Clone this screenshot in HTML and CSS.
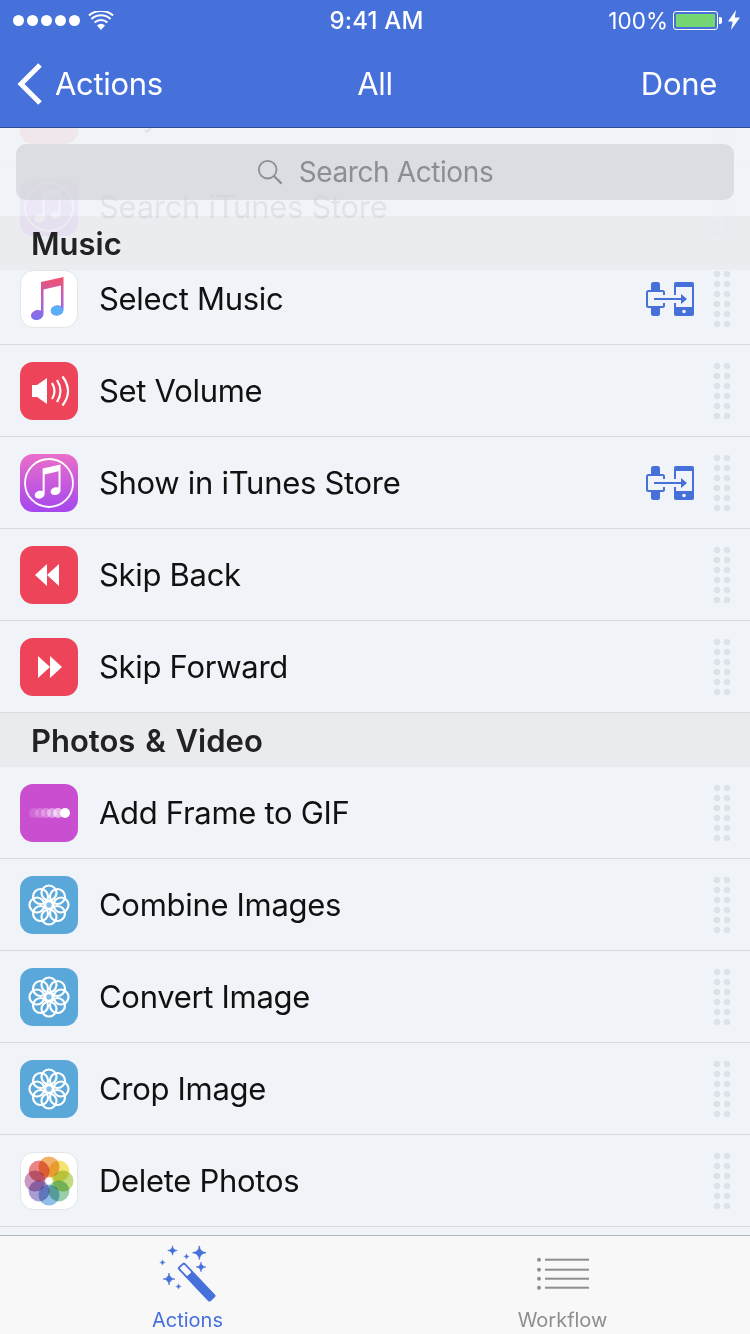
FILE: index.html
```html
<!DOCTYPE html>
<html lang="en">

<head>
  <meta charset="UTF-8">
  <meta name="viewport" content="width=device-width, initial-scale=1.0">
  <title>Actions</title>
  <link rel="stylesheet" href="styles.css">
</head>

<body>

  <!-- shared icons -->
  <svg class="sprites" width="0" height="0" aria-hidden="true">
    <defs>
      <linearGradient id="music-grad" x1="0.45" y1="0" x2="0.45" y2="1">
        <stop offset="0" stop-color="#f5506a" />
        <stop offset="0.5" stop-color="#b85fc4" />
        <stop offset="1" stop-color="#7a70f2" />
      </linearGradient>
      <linearGradient id="itunes-grad" x1="0" y1="0" x2="0" y2="1">
        <stop offset="0" stop-color="#ea6fc9" />
        <stop offset="1" stop-color="#a547ee" />
      </linearGradient>
    </defs>
    <symbol id="transfer" viewBox="0 0 48 34">
      <rect x="5" y="0" width="9" height="34" rx="2.500" fill="#4670da" />
      <rect x="1" y="9" width="17" height="16" rx="1.500" fill="#f0f3f8" stroke="#4670da" stroke-width="2" />
      <rect x="16.500" y="13" width="3" height="8" fill="#f0f3f8" />
      <rect x="28" y="0" width="20" height="34" rx="2" fill="#4670da" />
      <rect x="30" y="5" width="16" height="20" fill="#f0f3f8" />
      <rect x="28" y="13" width="2" height="8" fill="#f0f3f8" />
      <circle cx="38" cy="29.500" r="1.800" fill="#f0f3f8" />
      <rect x="8" y="16" width="32" height="2" fill="#4670da" />
      <path d="M35 12l6 5-6 5z" fill="#4670da" />
    </symbol>
    <symbol id="note" viewBox="0 0 58 58">
      <path d="M21 12 43.500 7V39C43.500 43 40 45.500 36.500 45.500 33 45.500 31 43.700 31 41.300 31 38 34.500 35.500 38 35.500 39 35.500 40.200 35.700 41 36V15.500L23.500 19.500V43.500C23.500 47.500 20 50 16.500 50 13 50 11 48.200 11 45.800 11 42.500 14.500 40 18 40 19 40 20.200 40.200 21 40.500z" />
    </symbol>
    <symbol id="blossom" viewBox="0 0 58 58">
      <rect width="58" height="58" rx="13" fill="#5aa8da" />
      <g fill="none" stroke="#fff" stroke-width="2.200">
        <circle cx="29" cy="17" r="7.500" />
        <circle cx="29" cy="17" r="7.500" transform="rotate(45 29 29)" />
        <circle cx="29" cy="17" r="7.500" transform="rotate(90 29 29)" />
        <circle cx="29" cy="17" r="7.500" transform="rotate(135 29 29)" />
        <circle cx="29" cy="17" r="7.500" transform="rotate(180 29 29)" />
        <circle cx="29" cy="17" r="7.500" transform="rotate(225 29 29)" />
        <circle cx="29" cy="17" r="7.500" transform="rotate(270 29 29)" />
        <circle cx="29" cy="17" r="7.500" transform="rotate(315 29 29)" />
      </g>
      <circle cx="29" cy="29" r="3.500" fill="#7fbbe3" stroke="#fff" stroke-width="1.600" />
    </symbol>
    <symbol id="sparkle" viewBox="0 0 10 10">
      <path d="M5 0Q5.400 4.600 10 5 5.400 5.400 5 10 4.600 5.400 0 5 4.600 4.600 5 0z" fill="#4670da" stroke="#4670da" stroke-width="0.500" />
    </symbol>
  </svg>

  <div class="screen">

    <header class="topbar">
      <div class="status">
        <div class="status-left">
          <span class="signal"><i></i><i></i><i></i><i></i><i></i></span>
          <svg class="wifi" width="26" height="19" viewBox="0 0 26 19">
            <path d="M13 19l-4-4.600a6 6 0 0 1 8 0z" fill="#fff" />
            <path d="M6.600 11.600a9.500 9.500 0 0 1 12.800 0M3.400 7.900a14.200 14.200 0 0 1 19.200 0M.9 4.600a18 18 0 0 1 24.200 0" fill="none" stroke="#fff" stroke-width="2" />
          </svg>
        </div>
        <div class="clock">9:41 AM</div>
        <div class="status-right">
          <span class="percent">100%</span>
          <span class="battery"><span class="battery-fill"></span></span>
          <span class="battery-nub"></span>
          <svg class="bolt" width="12" height="20" viewBox="0 0 12 20">
            <path d="M8 0 0 11.500h4.600L3 20l9-12.500H6.800z" fill="#fff" />
          </svg>
        </div>
      </div>
      <nav class="navbar">
        <a class="nav-back">
          <svg width="26" height="44" viewBox="0 0 26 44">
            <path d="M23 3 4 22l19 19" fill="none" stroke="#fff" stroke-width="5" />
          </svg>
          Actions
        </a>
        <span class="nav-title">All</span>
        <a class="nav-done">Done</a>
      </nav>
    </header>

    <main class="content">
      <div class="list">
        <div class="row">
          <svg class="icon" viewBox="0 0 58 58"><rect width="58" height="58" rx="13" fill="#ee4459" /></svg>
          <span class="row-label">Play Music</span>
          <span class="grip"></span>
        </div>
        <div class="row">
          <svg class="icon" viewBox="0 0 58 58">
            <rect width="58" height="58" rx="13" fill="url(#itunes-grad)" />
            <circle cx="29" cy="29" r="24" fill="none" stroke="#fff" stroke-width="1.800" />
            <use href="#note" x="6" y="5" width="46" height="46" fill="#fff" />
          </svg>
          <span class="row-label">Search iTunes Store</span>
          <span class="grip"></span>
        </div>

        <div class="row">
          <svg class="icon" viewBox="0 0 58 58">
            <rect x="0.500" y="0.500" width="57" height="57" rx="13" fill="#fff" stroke="#e3e5e8" />
            <use href="#note" width="58" height="58" fill="url(#music-grad)" />
            <ellipse cx="37" cy="40.500" rx="6.300" ry="5" fill="#5aaef8" />
          </svg>
          <span class="row-label">Select Music</span>
          <svg class="transfer"><use href="#transfer" /></svg>
          <span class="grip"></span>
        </div>
        <div class="row">
          <svg class="icon" viewBox="0 0 58 58">
            <rect width="58" height="58" rx="13" fill="#ee4459" />
            <path d="M12 23h5l10-7v26l-10-7h-5z" fill="#fff" />
            <path d="M32 21q5 8 0 16M37 18q7 11 0 22M42.500 14.500q11 14.500 0 29" fill="none" stroke="#fff" stroke-width="2.200" />
          </svg>
          <span class="row-label">Set Volume</span>
          <span class="grip"></span>
        </div>
        <div class="row">
          <svg class="icon" viewBox="0 0 58 58">
            <rect width="58" height="58" rx="13" fill="url(#itunes-grad)" />
            <circle cx="29" cy="29" r="24" fill="none" stroke="#fff" stroke-width="1.800" />
            <use href="#note" x="6" y="5" width="46" height="46" fill="#fff" />
          </svg>
          <span class="row-label">Show in iTunes Store</span>
          <svg class="transfer"><use href="#transfer" /></svg>
          <span class="grip"></span>
        </div>
        <div class="row">
          <svg class="icon" viewBox="0 0 58 58">
            <rect width="58" height="58" rx="13" fill="#ee4459" />
            <path d="M27 18v22L15 29zM39 18v22L27 29z" fill="#fff" />
          </svg>
          <span class="row-label">Skip Back</span>
          <span class="grip"></span>
        </div>
        <div class="row">
          <svg class="icon" viewBox="0 0 58 58">
            <rect width="58" height="58" rx="13" fill="#ee4459" />
            <path d="M18 18v22l12-11zM30 18v22l12-11z" fill="#fff" />
          </svg>
          <span class="row-label">Skip Forward</span>
          <span class="grip"></span>
        </div>

        <h2 class="section">Photos &amp; Video</h2>

        <div class="row">
          <svg class="icon" viewBox="0 0 58 58">
            <rect width="58" height="58" rx="13" fill="#c94fd0" />
            <g fill="#fff">
              <circle cx="14" cy="29" r="5" opacity="0.150" />
              <circle cx="20" cy="29" r="5" opacity="0.220" />
              <circle cx="26" cy="29" r="5" opacity="0.300" />
              <circle cx="32" cy="29" r="5" opacity="0.420" />
              <circle cx="38" cy="29" r="5" opacity="0.600" />
              <circle cx="45" cy="29" r="5" />
            </g>
          </svg>
          <span class="row-label">Add Frame to GIF</span>
          <span class="grip"></span>
        </div>
        <div class="row">
          <svg class="icon"><use href="#blossom" /></svg>
          <span class="row-label">Combine Images</span>
          <span class="grip"></span>
        </div>
        <div class="row">
          <svg class="icon"><use href="#blossom" /></svg>
          <span class="row-label">Convert Image</span>
          <span class="grip"></span>
        </div>
        <div class="row">
          <svg class="icon"><use href="#blossom" /></svg>
          <span class="row-label">Crop Image</span>
          <span class="grip"></span>
        </div>
        <div class="row">
          <svg class="icon" viewBox="0 0 58 58">
            <rect x="0.500" y="0.500" width="57" height="57" rx="13" fill="#fff" stroke="#e3e5e8" />
            <g class="petals">
              <circle cx="29" cy="15" r="10.500" fill="#f0a24e" />
              <circle cx="29" cy="15" r="10.500" fill="#f3de55" transform="rotate(45 29 29)" />
              <circle cx="29" cy="15" r="10.500" fill="#b7d568" transform="rotate(90 29 29)" />
              <circle cx="29" cy="15" r="10.500" fill="#84c79b" transform="rotate(135 29 29)" />
              <circle cx="29" cy="15" r="10.500" fill="#7bb4e2" transform="rotate(180 29 29)" />
              <circle cx="29" cy="15" r="10.500" fill="#9a8dc9" transform="rotate(225 29 29)" />
              <circle cx="29" cy="15" r="10.500" fill="#c286b6" transform="rotate(270 29 29)" />
              <circle cx="29" cy="15" r="10.500" fill="#e6716f" transform="rotate(315 29 29)" />
            </g>
            <circle cx="29" cy="29" r="1.500" fill="#fff" />
          </svg>
          <span class="row-label">Delete Photos</span>
          <span class="grip"></span>
        </div>
        <div class="row">
          <svg class="icon" viewBox="0 0 58 58"><rect width="58" height="58" rx="13" fill="#fff" /></svg>
        </div>
      </div>

      <!-- pinned over the scrolled list -->
      <div class="search-wrap">
        <div class="search">
          <svg width="26" height="26" viewBox="0 0 28 28">
            <circle cx="11.500" cy="11.500" r="9.500" fill="none" stroke="#8c8e92" stroke-width="2" />
            <path d="M18.500 18.500l8 8" stroke="#8c8e92" stroke-width="2.400" />
          </svg>
          <span>Search Actions</span>
        </div>
      </div>
      <h2 class="section pinned">Music</h2>
    </main>

    <footer class="tabbar">
      <div class="tab active">
        <svg width="60" height="60" viewBox="0 0 60 60">
          <use href="#sparkle" x="9.500" y="0.500" width="10" height="10" />
          <use href="#sparkle" x="34.300" y="0.700" width="14" height="14" />
          <use href="#sparkle" x="25.500" y="8.500" width="6" height="6" />
          <use href="#sparkle" x="1.500" y="14.500" width="6" height="6" />
          <use href="#sparkle" x="38" y="17" width="10" height="10" />
          <use href="#sparkle" x="5" y="28" width="12" height="12" />
          <use href="#sparkle" x="17.500" y="38.500" width="6" height="6" />
          <rect x="-4.700" y="0" width="9.400" height="47" rx="2" transform="translate(22.500 20) rotate(-43.500)" fill="#4670da" />
          <rect x="-2.900" y="1.800" width="5.800" height="11" rx="1" transform="translate(22.500 20) rotate(-43.500)" fill="#f8f8f8" />
        </svg>
        <span>Actions</span>
      </div>
      <div class="tab">
        <svg width="60" height="60" viewBox="0 0 60 60">
          <g fill="#8e8e8e">
            <circle cx="6" cy="14.700" r="2" />
            <circle cx="6" cy="24.700" r="2" />
            <circle cx="6" cy="33.700" r="2" />
            <circle cx="6" cy="42.700" r="2" />
            <rect x="12" y="13.700" width="44" height="2" />
            <rect x="12" y="23.700" width="44" height="2" />
            <rect x="12" y="32.700" width="44" height="2" />
            <rect x="12" y="41.700" width="44" height="2" />
          </g>
        </svg>
        <span>Workflow</span>
      </div>
    </footer>

  </div>

</body>

</html>
```

FILE: styles.css
```css
:root {
  --blue: #4670da;
  --list-bg: #f0f3f8;
  --line: #d8dade;
  --dot: #dde1e9;
}

* {
  margin: 0;
  padding: 0;
  box-sizing: border-box;
}

body {
  background-color: var(--list-bg);
  color: #111;
  font-family: 'Inter', 'Liberation Sans', sans-serif;
}

.sprites {
  display: block;
  position: absolute;
}

.screen {
  width: 750px;
  height: 1334px;
  display: flex;
  flex-direction: column;
  overflow: hidden;
}

/* top bar */
.topbar {
  flex: none;
  height: 128px;
  background-color: var(--blue);
  border-bottom: 1px solid #2f4f94;
  color: #fff;
}

.status {
  height: 40px;
  display: grid;
  grid-template-columns: 1fr auto 1fr;
  align-items: center;
  padding: 0 10px 0 13px;
}

.status-left {
  display: flex;
  align-items: center;
  gap: 8px;
}

.signal {
  display: flex;
  gap: 3px;
}

.signal i {
  width: 11px;
  height: 11px;
  border-radius: 50%;
  background-color: #fff;
}

.clock {
  font-size: 24px;
  font-weight: 500;
  letter-spacing: 0.200px;
}

.status-right {
  display: flex;
  align-items: center;
  justify-content: flex-end;
}

.percent {
  font-size: 22.500px;
  margin-right: 5px;
}

.battery {
  width: 45px;
  height: 19px;
  padding: 2px;
  border: 1px solid #fff;
  border-radius: 3px;
  display: flex;
}

.battery-fill {
  flex: 1;
  background-color: #76d672;
  border-radius: 1px;
}

.battery-nub {
  width: 3px;
  height: 7px;
  margin-left: 1px;
  margin-right: 6px;
  background-color: #fff;
  border-radius: 0 2px 2px 0;
}

.navbar {
  height: 87px;
  display: grid;
  grid-template-columns: 1fr auto 1fr;
  align-items: center;
  padding: 0 33px;
  font-size: 31px;
  letter-spacing: -0.300px;
}

.nav-back {
  display: flex;
  align-items: center;
  gap: 12px;
  margin-left: -16px;
}

.nav-done {
  justify-self: end;
}

/* list */
.content {
  flex: 1;
  min-height: 0;
  position: relative;
  overflow: hidden;
}

.list {
  margin-top: -59px;
}

.row {
  height: 92px;
  display: flex;
  align-items: center;
  padding: 0 18px 0 20px;
  border-bottom: 1px solid var(--line);
}

.icon {
  width: 58px;
  height: 58px;
  flex: none;
  margin-right: 21px;
}

.row-label {
  flex: 1;
  font-size: 31px;
  letter-spacing: -0.300px;
}

.transfer {
  width: 48px;
  height: 34px;
  margin-right: 18px;
}

.grip {
  width: 20px;
  height: 60px;
  flex: none;
  background: radial-gradient(circle, var(--dot) 3px, transparent 3.600px) 0 0 / 10px 10px;
}

.petals circle {
  mix-blend-mode: multiply;
  opacity: 0.85;
}

.section {
  height: 54px;
  padding-left: 31px;
  display: flex;
  align-items: center;
  font-size: 31px;
  font-weight: 600;
  word-spacing: 2px;
  color: #222;
  background-color: #e9ebef;
}

/* pinned overlays */
.search-wrap {
  position: absolute;
  top: 0;
  left: 0;
  width: 100%;
  height: 88px;
  padding: 16px;
  background-color: rgba(240, 243, 248, 0.93);
}

.search {
  height: 56px;
  display: flex;
  align-items: center;
  justify-content: center;
  gap: 16px;
  background-color: rgba(204, 207, 212, 0.6);
  border-radius: 10px;
  font-size: 28px;
  letter-spacing: -0.400px;
  color: #8c8e92;
}

.section.pinned {
  position: absolute;
  top: 88px;
  left: 0;
  width: 100%;
  background-color: rgba(233, 235, 239, 0.93);
}

/* tab bar */
.tabbar {
  position: absolute;
  left: 0;
  bottom: 0;
  width: 750px;
  height: 99px;
  display: grid;
  grid-template-columns: 1fr 1fr;
  background-color: rgba(248, 248, 248, 0.97);
  border-top: 1px solid #b0b3b8;
}

.tab {
  display: flex;
  flex-direction: column;
  align-items: center;
  padding-top: 9px;
  font-size: 20px;
  color: #8e8e8e;
}

.tab svg {
  height: 60px;
  margin-bottom: 3px;
}

.tab.active {
  color: var(--blue);
}
```
